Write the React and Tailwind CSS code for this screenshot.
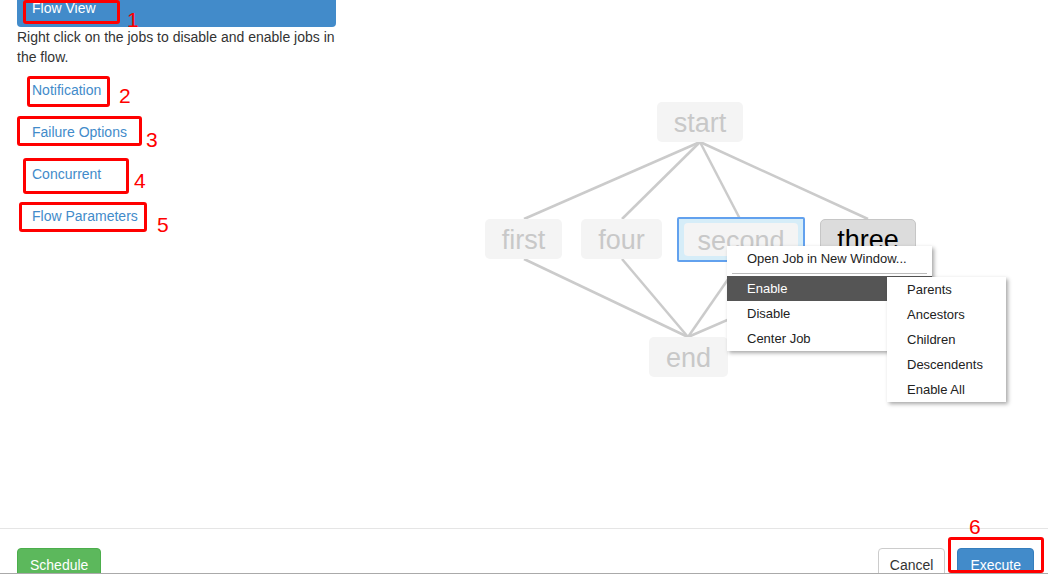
import React from 'react';

const links = ['Notification', 'Failure Options', 'Concurrent', 'Flow Parameters'];

// graph nodes, coordinates inside the canvas
const nodes = [
  { id: 'start', x: 321, y: 102, w: 86 },
  { id: 'first', x: 149, y: 219, w: 77 },
  { id: 'four', x: 245, y: 219, w: 81 },
  { id: 'end', x: 313, y: 337, w: 79 },
];

const edges = [
  [364, 142, 188, 219],
  [364, 142, 286, 219],
  [364, 142, 404, 219],
  [364, 142, 532, 219],
  [188, 259, 352, 337],
  [286, 259, 352, 337],
  [404, 262, 352, 337],
  [532, 259, 352, 337],
];

// red callouts drawn on top of the page
const marks = [
  { box: [23, 0, 97, 24], n: '1', at: [127, 9] },
  { box: [27, 76, 83, 31], n: '2', at: [119, 85] },
  { box: [17, 116, 125, 30], n: '3', at: [146, 129] },
  { box: [23, 158, 106, 36], n: '4', at: [134, 170] },
  { box: [19, 202, 128, 30], n: '5', at: [157, 214] },
  { box: [948, 537, 96, 36], n: '6', at: [969, 516] },
];

const mainMenu = ['Enable', 'Disable', 'Center Job'];
const subMenu = ['Parents', 'Ancestors', 'Children', 'Descendents', 'Enable All'];

export default function App() {
  return (
    <div className="relative w-[1048px] h-[575px] overflow-hidden bg-white text-[14px] leading-[20px] text-[#333] font-['Liberation_Sans',Arial,sans-serif]">
      <div className="flex h-[529px] border-b border-[#e5e5e5]">
        {/* sidebar */}
        <div className="w-[336px] pl-[17px] shrink-0">
          <div className="-mt-[12px] rounded-[4px] bg-[#428bca] px-[15px] pt-[10px] pb-[9px] text-white">
            Flow View
          </div>
          <p>Right click on the jobs to disable and enable jobs in the flow.</p>
          <ul className="mt-[3px] flex flex-col gap-[2px]">
            {links.map((l) => (
              <li key={l}>
                <a className="block px-[15px] py-[10px] text-[#428bca]">{l}</a>
              </li>
            ))}
          </ul>
        </div>

        {/* flow graph */}
        <div className="relative flex-1 h-full">
          <svg className="absolute inset-0" width="712" height="528">
            {edges.map(([x1, y1, x2, y2], i) => (
              <line key={i} x1={x1} y1={y1} x2={x2} y2={y2} stroke="#cbcbcb" strokeWidth="2.5" />
            ))}
          </svg>

          {nodes.map((n) => (
            <div
              key={n.id}
              className="absolute h-[40px] pt-[2px] flex items-center justify-center rounded-[5px] bg-[#f4f4f4] text-[27px] text-[#c8c8c8]"
              style={{ left: n.x, top: n.y, width: n.w }}
            >
              {n.id}
            </div>
          ))}

          <div className="absolute left-[341px] top-[217px] w-[128px] h-[45px] border-2 border-[#62a1ee] rounded-[2px] bg-[#d6edf8] px-[5px] pt-[4px] pb-[4px]">
            <div className="h-full pt-[2px] rounded-[4px] bg-[#f4f4f4] flex items-center justify-center text-[27px] text-[#c8c8c8]">
              second
            </div>
          </div>

          <div className="absolute left-[484px] top-[219px] w-[96px] h-[40px] pt-[2px] flex items-center justify-center rounded-[5px] border border-[#c6c6c6] bg-[#dcdcdc] text-[27px] text-black">
            three
          </div>

          {/* context menu */}
          <div className="absolute left-[391px] top-[246px] w-[205px] bg-white shadow-[2px_2px_4px_rgba(0,0,0,0.35)] text-[13px] text-[#222]">
            <div className="h-[25px] flex items-center pl-[20px]">Open Job in New Window...</div>
            <div className="h-[5px] flex items-center px-[5px]">
              <div className="h-[1px] w-full bg-[#bbb]" />
            </div>
            {mainMenu.map((m, i) => (
              <div
                key={m}
                className={`h-[25px] flex items-center pl-[20px] ${i === 0 ? 'bg-[#555] text-white' : ''}`}
              >
                {m}
              </div>
            ))}
          </div>

          <div className="absolute left-[551px] top-[277px] w-[119px] bg-white shadow-[2px_2px_4px_rgba(0,0,0,0.35)] text-[13px] text-[#222]">
            {subMenu.map((m) => (
              <div key={m} className="h-[25px] flex items-center pl-[20px]">
                {m}
              </div>
            ))}
          </div>
        </div>
      </div>

      {/* footer */}
      <div className="h-[45px] overflow-hidden border-b border-[#aaa] flex justify-between items-start pt-[19px] pl-[17px] pr-[14px]">
        <button className="h-[34px] px-[12px] rounded-[4px] bg-[#5cb85c] border border-[#4cae4c] text-white">
          Schedule
        </button>
        <div className="flex gap-[12px]">
          <button className="h-[34px] px-[11px] rounded-[4px] bg-white border border-[#ccc] text-[#333]">
            Cancel
          </button>
          <button className="h-[34px] px-[12px] rounded-[4px] bg-[#428bca] border border-[#357ebd] text-white">
            Execute
          </button>
        </div>
      </div>

      {marks.map((m) => (
        <React.Fragment key={m.n}>
          <div
            className="absolute border-[3px] border-[#f00] rounded-[3px]"
            style={{ left: m.box[0], top: m.box[1], width: m.box[2], height: m.box[3] }}
          />
          <div
            className="absolute text-[21px] leading-none text-[#f00]"
            style={{ left: m.at[0], top: m.at[1] }}
          >
            {m.n}
          </div>
        </React.Fragment>
      ))}
    </div>
  );
}
